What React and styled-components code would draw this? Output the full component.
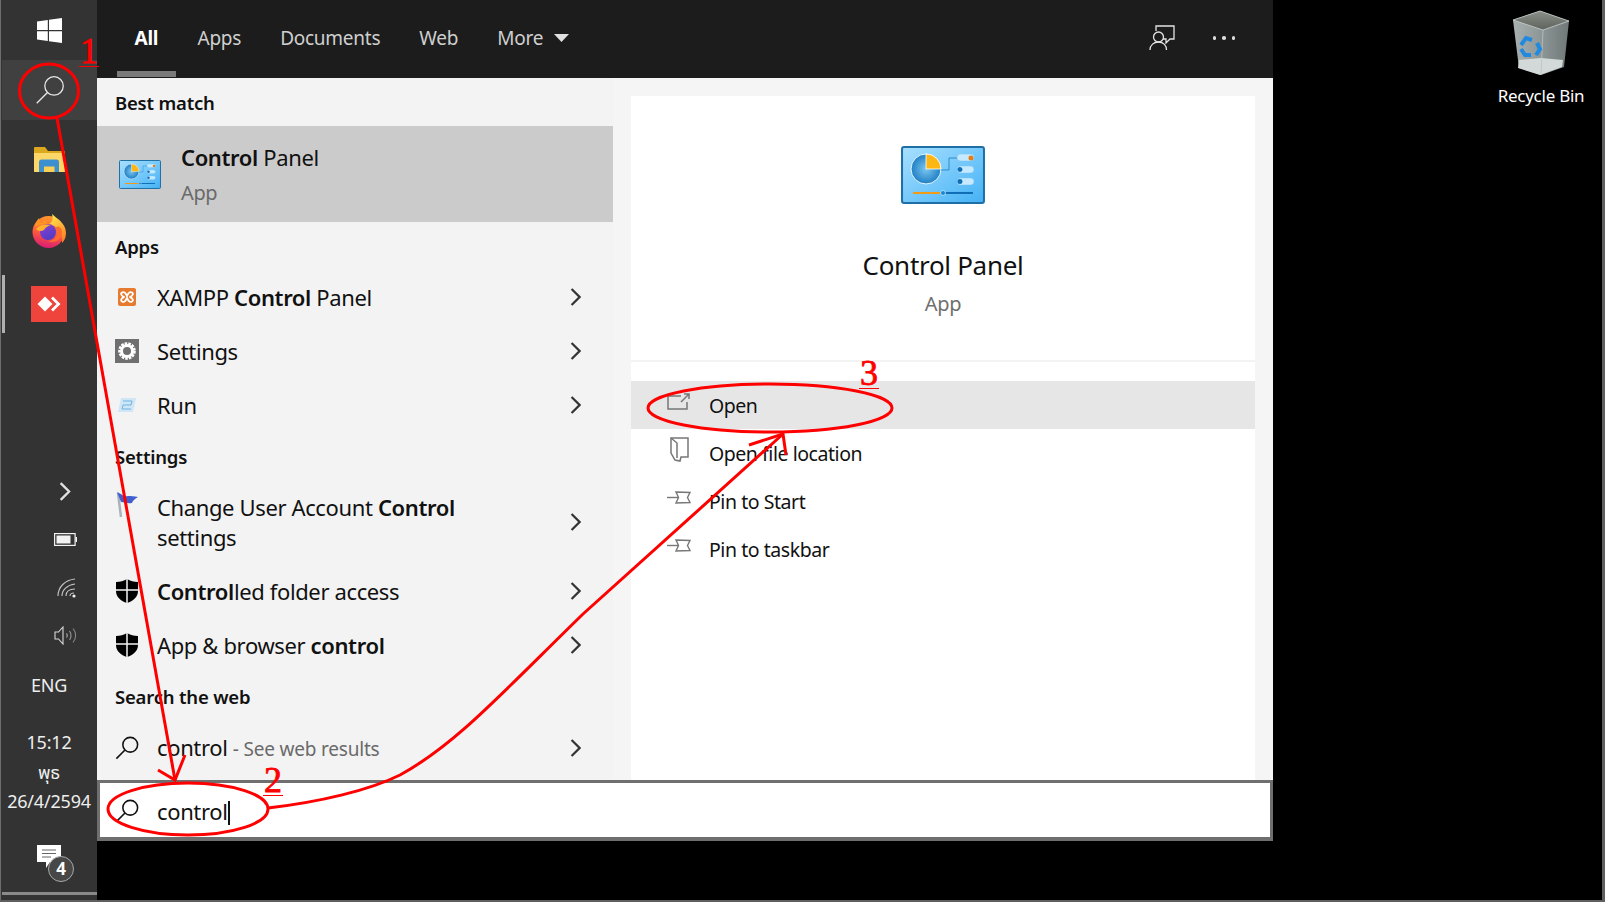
import React from 'react'
import styled, { createGlobalStyle } from 'styled-components'

const GlobalStyle = createGlobalStyle`
  html, body { margin: 0; padding: 0; background: #000; overflow: hidden; }
  * { box-sizing: border-box; }
  body { font-family: "Noto Sans", "Noto Sans Thai", "DejaVu Sans", sans-serif; }
`

const Screen = styled.div`
  position: relative;
  display: flex;
  width: 1605px;
  height: 902px;
  background: #000;
  border-right: 3px solid #5f5f5f;
  border-bottom: 2px solid #5f5f5f;
  overflow: hidden;
`

/* left taskbar */
const Taskbar = styled.div`
  width: 97px;
  height: 900px;
  flex: none;
  display: flex;
  flex-direction: column;
  background: #333;
  border-left: 1px solid #6e6e6e;
  color: #eee;
`
const TaskSlot = styled.div`
  height: ${(p) => p.$h}px;
  flex: none;
  display: flex;
  align-items: center;
  justify-content: ${(p) => (p.$right ? 'flex-end' : 'center')};
  padding-right: ${(p) => (p.$right ? p.$right : 0)}px;
  background: ${(p) => (p.$hot ? '#404040' : 'transparent')};
  margin-left: ${(p) => (p.$hot ? '1px' : '0')};
  margin-bottom: ${(p) => p.$after || 0}px;
  position: relative;
  &::before {
    content: '';
    display: ${(p) => (p.$running ? 'block' : 'none')};
    position: absolute;
    left: 1px;
    top: 7px;
    width: 3px;
    height: 58px;
    background: #b0b0b0;
  }
`
const Tray = styled.div`
  margin-top: auto;
  display: flex;
  flex-direction: column;
`
const LangText = styled.span`
  font-size: 18px;
  letter-spacing: -0.3px;
`
const Clock = styled.div`
  height: 113px;
  padding-top: 16px;
  text-align: center;
  font-size: 18px;
  line-height: 29.5px;
  letter-spacing: -0.2px;
  white-space: nowrap;
`
const TaskLine = styled.div`
  height: 3px;
  margin: 0 0 5px 1px;
  background: #8a8a8a;
`
const NoteWrap = styled.div`
  position: relative;
  width: 26px;
  height: 24px;
  margin: 0 0 4px 0;
  left: 1px;
`
const NoteBadge = styled.span`
  position: absolute;
  left: 11px;
  top: 11px;
  width: 26px;
  height: 26px;
  border-radius: 50%;
  background: #474747;
  border: 1px solid #a8a8a8;
  color: #fff;
  font-size: 17px;
  font-weight: 700;
  line-height: 24px;
  text-align: center;
`

/* search flyout */
const SearchWindow = styled.div`
  width: 1176px;
  height: 841px;
  flex: none;
  display: flex;
  flex-direction: column;
`
const TopBar = styled.div`
  height: 78px;
  flex: none;
  display: flex;
  align-items: center;
  padding-left: 20px;
  background: #1c1c1c;
`
const Tab = styled.div`
  position: relative;
  height: 78px;
  padding: 0 17.5px 2px;
  margin-right: 4px;
  display: flex;
  align-items: center;
  gap: 11px;
  font-size: 19px;
  letter-spacing: -0.25px;
  font-weight: ${(p) => (p.$active ? 700 : 400)};
  color: ${(p) => (p.$active ? '#fff' : '#cfcfcf')};
  min-width: ${(p) => (p.$active ? '59px' : '0')};
  &::after {
    content: '';
    display: ${(p) => (p.$active ? 'block' : 'none')};
    position: absolute;
    left: 0;
    right: 0;
    bottom: 1px;
    height: 6px;
    background: #7a7a7a;
  }
`
const TopActions = styled.div`
  margin-left: auto;
  display: flex;
  align-items: center;
  gap: 38px;
  padding: 0 38px 2px 0;
`
const Dots = styled.div`
  display: flex;
  gap: 6px;
  span { width: 3.5px; height: 3.5px; border-radius: 50%; background: #ddd; }
`
const Body = styled.div`
  flex: 1;
  min-height: 0;
  display: flex;
`
const Results = styled.div`
  width: 516px;
  flex: none;
  background: #f3f3f3;
  color: #111;
`
const Heading = styled.div`
  height: ${(p) => p.$h || 48}px;
  padding-left: 18px;
  display: flex;
  align-items: center;
  font-size: 18.5px;
  letter-spacing: -0.2px;
  font-weight: 600;
  color: #111;
`
const BestMatch = styled.div`
  height: 96px;
  display: flex;
  align-items: center;
  padding: 1px 0 0 22px;
  background: #cbcbcb;
`
const BestText = styled.div`
  margin-left: 20px;
  font-size: 22px;
  letter-spacing: -0.37px;
  line-height: 36px;
  b { font-weight: 600; }
  span { display: block; font-size: 20px; color: #6a6a6a; }
`
const Row = styled.div`
  height: ${(p) => p.$h || 54}px;
  display: flex;
  align-items: center;
  padding: 0 32px 0 18px;
  font-size: 22px;
  letter-spacing: -0.37px;
  line-height: 30px;
`
const RowIcon = styled.div`
  width: 24px;
  height: 26px;
  flex: none;
  display: flex;
  align-items: center;
  justify-content: center;
  margin-right: 18px;
  align-self: ${(p) => (p.$top ? 'flex-start' : 'center')};
  margin-top: ${(p) => (p.$top ? '12px' : '0')};
`
const RowText = styled.div`
  flex: 1;
  min-width: 0;
  b { font-weight: 600; }
`
const Hint = styled.span`
  font-size: 19px;
  letter-spacing: -0.2px;
  color: #6a6a6a;
`
const Detail = styled.div`
  flex: 1;
  background: #f5f5f5;
  padding: 18px 18px 0;
`
const DetailCard = styled.div`
  height: 684px;
  background: #fff;
  display: flex;
  flex-direction: column;
`
const DetailHead = styled.div`
  height: 266px;
  flex: none;
  display: flex;
  flex-direction: column;
  align-items: center;
  padding-top: 50px;
  border-bottom: 2px solid #f3f3f3;
`
const DetailTitle = styled.div`
  margin-top: 42px;
  font-size: 26px;
  letter-spacing: -0.3px;
  line-height: 38px;
  color: #111;
`
const DetailSub = styled.div`
  margin-top: 6px;
  font-size: 20px;
  letter-spacing: -0.3px;
  line-height: 28px;
  color: #6f6f6f;
`
const Actions = styled.div`
  padding-top: 19px;
`
const Action = styled.div`
  height: 48px;
  display: flex;
  align-items: center;
  padding: 1px 0 0 36px;
  font-size: 19.5px;
  letter-spacing: -0.45px;
  color: #111;
  background: ${(p) => (p.$hot ? '#e6e6e6' : 'transparent')};
`
const ActionIcon = styled.div`
  width: 24px;
  height: 28px;
  flex: none;
  margin: -8px 18px 0 0;
  display: flex;
  align-items: center;
  justify-content: center;
`
const SearchBox = styled.div`
  height: 61px;
  flex: none;
  display: flex;
  align-items: center;
  padding: 1px 0 0 15px;
  background: #fff;
  border: 3px solid #6f6f6f;
  border-bottom-width: 4px;
  font-size: 22px;
  letter-spacing: -0.37px;
  color: #111;
`
const Caret = styled.span`
  display: inline-block;
  width: 2px;
  height: 24px;
  margin-left: 1px;
  background: #111;
  vertical-align: -5px;
`

/* desktop */
const Desktop = styled.div`
  flex: 1;
  display: flex;
  justify-content: flex-end;
  padding: 10px 11px 0 0;
`
const DesktopItem = styled.div`
  width: 100px;
  height: 110px;
  display: flex;
  flex-direction: column;
  align-items: center;
  color: #fff;
  font-size: 17px;
  letter-spacing: -0.25px;
  white-space: nowrap;
`
const ItemLabel = styled.div`
  margin-top: 8px;
  line-height: 24px;
`

/* the red marks somebody drew on the screenshot */
const Overlay = styled.svg`
  position: absolute;
  inset: 0;
  width: 1605px;
  height: 902px;
  pointer-events: none;
`
const StepNumber = styled.span`
  position: absolute;
  left: ${(p) => p.$x}px;
  top: ${(p) => p.$y}px;
  width: 20px;
  height: 31px;
  border-bottom: 1.5px solid #f00;
  font-family: "Liberation Serif", serif;
  font-size: 36px;
  line-height: 30px;
  text-align: center;
  color: #f00;
  -webkit-text-stroke: 0.8px #f00;
`

const SearchGlyph = ({ size = 26, color = '#111', width = 1.7 }) => (
  <svg width={size} height={size} viewBox="0 0 26 26" fill="none" stroke={color} strokeWidth={width}>
    <circle cx="16.5" cy="9.5" r="8" />
    <path d="M10.8 15.2 1.5 24.5" />
  </svg>
)

const Chevron = ({ color = '#333', h = 18 }) => (
  <svg width={h * 0.62} height={h} viewBox="0 0 11 18" fill="none" stroke={color} strokeWidth="2.2">
    <path d="M1.5 1 9.5 9 1.5 17" />
  </svg>
)

const WindowsLogo = () => (
  <svg width="25" height="25" viewBox="0 0 25 25" fill="#fff">
    <path d="M0 3.6 10.8 2v10H0zM12 1.8 25 0v12H12zM0 13.2h10.8v9.9L0 21.5zM12 13.2h13V25l-13-1.8z" />
  </svg>
)

const ExplorerIcon = () => (
  <svg width="33" height="27" viewBox="0 0 33 27">
    <path d="M1 2a1 1 0 0 1 1-1h10l3 4h16a1 1 0 0 1 1 1v19a1 1 0 0 1-1 1H2a1 1 0 0 1-1-1z" fill="#dba91e" />
    <path d="M1 7h31v18a1 1 0 0 1-1 1H2a1 1 0 0 1-1-1z" fill="#fbd868" />
    <path d="M6 26V16a2.500 2.500 0 0 1 2.500-2.500h15A2.500 2.500 0 0 1 26 16v10z" fill="#3d90cf" />
    <path d="M11 20.500h10.500V26H11z" fill="#f9cf55" />
  </svg>
)

const FirefoxIcon = () => (
  <svg width="34" height="35" viewBox="0 0 34 35">
    <defs>
      <linearGradient id="ffBody" x1="0.6" y1="0" x2="0.4" y2="1">
        <stop offset="0" stopColor="#ff9a2e" />
        <stop offset="0.55" stopColor="#ff5a3c" />
        <stop offset="1" stopColor="#d81b74" />
      </linearGradient>
      <linearGradient id="ffFlame" x1="0.3" y1="0" x2="0.8" y2="1">
        <stop offset="0" stopColor="#ffe44d" />
        <stop offset="1" stopColor="#ff7a22" />
      </linearGradient>
      <linearGradient id="ffGlobe" x1="0.2" y1="0" x2="0.8" y2="1">
        <stop offset="0" stopColor="#8a3fd1" />
        <stop offset="1" stopColor="#4a3cc4" />
      </linearGradient>
    </defs>
    <circle cx="16.500" cy="18" r="16" fill="url(#ffBody)" />
    <path d="M20 0c5 5 14 9 14 19 0 5-2 8-4 10 1-9-3-17-13-19 4-2 4-6 3-10z" fill="url(#ffFlame)" />
    <path d="M3 13c0-4 2-6 4-9 0 3 1 4 3 5 1-2 3-4 5-5-1 2-1 4 0 6-4 0-9 1-12 3z" fill="#ff9422" />
    <circle cx="16" cy="18" r="8" fill="url(#ffGlobe)" />
    <path d="M4 15c4-5 10-5 15-4-4 1-6 3-7 5-3 2-6 1-8-1z" fill="#ffb02e" />
    <path d="M24 13c3 7 0 14-8 14 6 3 14-1 14-9 0-3-2-6-6-5z" fill="#ff6b2e" />
  </svg>
)

const AnyDeskIcon = () => (
  <svg width="36" height="36" viewBox="0 0 36 36">
    <rect width="36" height="36" fill="#ef443b" />
    <path d="M14 10.5 21.5 18 14 25.5 6.5 18z" fill="#fff" />
    <path d="M22 10.5 29.5 18 22 25.5 20 23.5 25.5 18 20 12.5z" fill="#fff" />
  </svg>
)

const BatteryIcon = () => (
  <svg width="23" height="13" viewBox="0 0 23 13">
    <rect x="0.6" y="0.6" width="20.5" height="11.8" fill="none" stroke="#f2f2f2" strokeWidth="1.2" />
    <rect x="2.5" y="2.5" width="14" height="8" fill="#f2f2f2" />
    <rect x="21.5" y="4" width="1.5" height="5" fill="#f2f2f2" />
  </svg>
)

const WifiIcon = () => (
  <svg width="20" height="20" viewBox="0 0 20 20" fill="none" stroke="#c4c4c4" strokeWidth="1.1">
    <path d="M1 18C1 9 8 2 18 1" />
    <path d="M5 18c0-6 5-11 13-12" />
    <path d="M9 18c0-4 3-7 9-7" />
    <path d="M13 18c0-2 2-3 4-3" />
    <circle cx="17" cy="18" r="1.6" fill="#eee" stroke="none" />
  </svg>
)

const SpeakerIcon = () => (
  <svg width="23" height="19" viewBox="0 0 23 19" fill="none" stroke="#d8d8d8" strokeWidth="1.1">
    <path d="M1 6h3.5L9 1v17l-4.5-5H1z" />
    <path d="M12.5 7.5c1 1 1 3 0 4" stroke="#aaa" />
    <path d="M15.5 5c2 2.500 2 6.500 0 9" stroke="#999" />
    <path d="M19 2.500c3.500 4 3.500 10 0 14" stroke="#888" />
  </svg>
)

const NoteIcon = () => (
  <svg width="24" height="24" viewBox="0 0 24 24">
    <path d="M0 0h24v17H13l-4 6v-6H0z" fill="#fff" />
    <path d="M5 5h14M5 8.500h14M5 12h9" stroke="#666" strokeWidth="1" />
  </svg>
)

const ControlPanelIcon = ({ size = 84 }) => (
  <svg width={size} height={size * 0.69} viewBox="0 0 84 58">
    <defs>
      <linearGradient id={`cpBg${size}`} x1="0" y1="0" x2="1" y2="1">
        <stop offset="0" stopColor="#a8e0ff" />
        <stop offset="1" stopColor="#45b2f5" />
      </linearGradient>
      <radialGradient id={`cpPie${size}`}>
        <stop offset="0" stopColor="#7cc6f0" />
        <stop offset="1" stopColor="#1f7fc4" />
      </radialGradient>
    </defs>
    <rect x="1" y="1" width="82" height="56" rx="2" fill={`url(#cpBg${size})`} stroke="#1d6fa5" strokeWidth="2" />
    <circle cx="25" cy="23" r="15" fill={`url(#cpPie${size})`} stroke="#e4f5ff" strokeWidth="1" />
    <path d="M25 8A15 15 0 0 1 40 23H25z" fill="#fdb714" stroke="#fff" strokeWidth="0.8" />
    <path d="M40 24h8V12h8" fill="none" stroke="#1d7cc0" strokeWidth="0.8" />
    <rect x="56" y="8" width="17" height="7" rx="3.500" fill="#c5eaff" stroke="#74c3ef" strokeWidth="0.5" />
    <rect x="56" y="20" width="17" height="7" rx="3.500" fill="#c5eaff" stroke="#74c3ef" strokeWidth="0.5" />
    <rect x="56" y="32" width="17" height="7" rx="3.500" fill="#c5eaff" stroke="#74c3ef" strokeWidth="0.5" />
    <circle cx="70" cy="12" r="2.500" fill="#e87b12" />
    <circle cx="59" cy="23.500" r="2.500" fill="#0f6db5" />
    <circle cx="59" cy="35.500" r="2.500" fill="#0f6db5" />
    <path d="M12 47h30" stroke="#f59a12" strokeWidth="2" />
    <path d="M42 47h30" stroke="#0f6db5" strokeWidth="2" />
    <circle cx="42" cy="47" r="2.500" fill="#1989d8" stroke="#bfe6ff" strokeWidth="0.8" />
  </svg>
)

const XamppIcon = () => (
  <svg width="18" height="18" viewBox="0 0 18 18">
    <rect width="18" height="18" rx="2" fill="#e67a2e" />
    <path d="M4 4.500c2.500-1.500 4 1.500 5 3.500 1-2 2.500-5 5-3.500 2 1.500 0 4-2.500 4.500 2.500.5 4.500 3 2.500 4.500-2.500 1.500-4-1.500-5-3.500-1 2-2.500 5-5 3.500-2-1.500 0-4 2.500-4.500C4 8.500 2 6 4 4.500z" fill="none" stroke="#fff" strokeWidth="1.800" />
  </svg>
)

const SettingsIcon = () => (
  <svg width="24" height="24" viewBox="0 0 24 24">
    <rect width="24" height="24" fill="#6f6f6f" />
    <circle cx="12" cy="12" r="7" fill="none" stroke="#fff" strokeWidth="3.600" strokeDasharray="2.400 1.000" />
    <circle cx="12" cy="12" r="5.500" fill="none" stroke="#fff" strokeWidth="3" />
  </svg>
)

const RunIcon = () => (
  <svg width="18" height="14" viewBox="0 0 18 14">
    <path d="M3 0h15l-3 14H0z" fill="#cfe6f6" />
    <path d="M5 3h9l-1 4H5l-1 4h9" fill="none" stroke="#6fb2e0" strokeWidth="1" />
  </svg>
)

const FlagIcon = () => (
  <svg width="24" height="26" viewBox="0 0 24 26">
    <path d="M3 1l3 24" stroke="#a9b1ba" strokeWidth="2.500" />
    <path d="M2 0c5 2 6 5 11 4 3 0 6 0 10 1-3 2-5 3-6 6-5 1-7-1-11-1z" fill="#3f5fd0" />
  </svg>
)

const ShieldIcon = () => (
  <svg width="24" height="24" viewBox="0 0 24 24">
    <path d="M12 0c3 2 7 3 11 3v9c0 6-5 10-11 12C6 22 1 18 1 12V3c4 0 8-1 11-3z" fill="#000" />
    <path d="M12 0v24M1 11h22" stroke="#f3f3f3" strokeWidth="1.500" />
  </svg>
)

const FeedbackIcon = () => (
  <svg width="26" height="26" viewBox="0 0 26 26" fill="none" stroke="#e4e4e4" strokeWidth="1.300">
    <path d="M7 6V1h18v13h-4l-4 4v-4h-3" />
    <circle cx="9.500" cy="12" r="5" />
    <path d="M1 25c0-5 4-8 8.500-8s8 3 8 8" />
  </svg>
)

const OpenIcon = () => (
  <svg width="24" height="17" viewBox="0 0 24 17" fill="none" stroke="#777" strokeWidth="1.500">
    <path d="M14 3H1v13h19V9" />
    <path d="M14 9 22 1M17 1h5v5" />
  </svg>
)

const FolderIcon = () => (
  <svg width="19" height="25" viewBox="0 0 19 25" fill="none" stroke="#777" strokeWidth="1.500">
    <path d="M1 1h17v19h-7l-1 4-5-1-4-7z" />
    <path d="M1 1l6 5v15" />
  </svg>
)

const PinIcon = () => (
  <svg width="24" height="13" viewBox="0 0 24 13" fill="none" stroke="#777" strokeWidth="1.400">
    <path d="M0 6.500h11.500" />
    <path d="M9 1l14 .5L20.500 6.500 23 11.500 9 12l2.500-5.500z" />
  </svg>
)

const BinIcon = () => (
  <svg width="58" height="66" viewBox="0 0 58 66">
    <defs>
      <linearGradient id="binBody" x1="0" y1="0" x2="1" y2="0">
        <stop offset="0" stopColor="#a8b0b0" />
        <stop offset="0.55" stopColor="#8b9494" />
        <stop offset="1" stopColor="#6f7777" />
      </linearGradient>
      <linearGradient id="binIn" x1="0" y1="0" x2="0" y2="1">
        <stop offset="0" stopColor="#8a8f88" />
        <stop offset="1" stopColor="#5e625c" />
      </linearGradient>
    </defs>
    <path d="M1 10 28 1l29 10-5 46-23 8-22-7z" fill="url(#binBody)" />
    <path d="M1 10 28 1l29 10-26 9z" fill="url(#binIn)" stroke="#c9cfcf" strokeWidth="0.800" />
    <path d="M6 58 7 50l22-2 22 2-1 7-22 8z" fill="#d3d8d8" />
    <path d="M31 20 29 65" stroke="#bcc2c2" strokeWidth="0.800" />
    <g fill="none" stroke="#1f8ae0" strokeWidth="4">
      <path d="M9 35l5-7 6 2" />
      <path d="M19 45h-6l-4-6" />
      <path d="M25 33l3 6-4 6" />
    </g>
  </svg>
)

const Marks = () => (
  <Overlay viewBox="0 0 1605 902" fill="none" stroke="#f00" strokeWidth="3">
    <ellipse cx="49" cy="91" rx="29.500" ry="27" />
    <path d="M57 118 175 780" />
    <path d="M158 770 175 780 185 755" />
    <ellipse cx="188" cy="809" rx="80" ry="26" />
    <path d="M268 808C320 802 370 790 400 775 455 745 500 695 583 614L783 434" />
    <path d="M749 445 783 434 786 455" />
    <ellipse cx="770" cy="408" rx="122" ry="24" />
  </Overlay>
)

const App = () => (
  <>
    <GlobalStyle />
    <Screen>
      <Taskbar>
        <TaskSlot $h={60}><WindowsLogo /></TaskSlot>
        <TaskSlot $h={60} $hot $after={4}><SearchGlyph size={30} color="#e8e8e8" width={1.1} /></TaskSlot>
        <TaskSlot $h={70}><ExplorerIcon /></TaskSlot>
        <TaskSlot $h={74}><FirefoxIcon /></TaskSlot>
        <TaskSlot $h={72} $running><AnyDeskIcon /></TaskSlot>
        <Tray>
          <TaskSlot $h={48} $right={26}><Chevron color="#e0e0e0" h={19} /></TaskSlot>
          <TaskSlot $h={48} $right={20}><BatteryIcon /></TaskSlot>
          <TaskSlot $h={49} $right={20}><WifiIcon /></TaskSlot>
          <TaskSlot $h={46} $right={20}><SpeakerIcon /></TaskSlot>
          <TaskSlot $h={54}><LangText>ENG</LangText></TaskSlot>
          <Clock>15:12<br />พุธ<br />26/4/2594</Clock>
          <TaskSlot $h={67}>
            <NoteWrap>
              <NoteIcon />
              <NoteBadge>4</NoteBadge>
            </NoteWrap>
          </TaskSlot>
          <TaskLine />
        </Tray>
      </Taskbar>

      <SearchWindow>
        <TopBar>
          <Tab $active>All</Tab>
          <Tab>Apps</Tab>
          <Tab>Documents</Tab>
          <Tab>Web</Tab>
          <Tab>
            More
            <svg width="15" height="8" viewBox="0 0 15 8"><path d="M0 0h15L7.500 8z" fill="#e0e0e0" /></svg>
          </Tab>
          <TopActions>
            <FeedbackIcon />
            <Dots><span /><span /><span /></Dots>
          </TopActions>
        </TopBar>

        <Body>
          <Results>
            <Heading>Best match</Heading>
            <BestMatch>
              <ControlPanelIcon size={42} />
              <BestText>
                <b>Control</b> Panel
                <span>App</span>
              </BestText>
            </BestMatch>
            <Heading>Apps</Heading>
            <Row>
              <RowIcon><XamppIcon /></RowIcon>
              <RowText>XAMPP <b>Control</b> Panel</RowText>
              <Chevron />
            </Row>
            <Row>
              <RowIcon><SettingsIcon /></RowIcon>
              <RowText>Settings</RowText>
              <Chevron />
            </Row>
            <Row>
              <RowIcon><RunIcon /></RowIcon>
              <RowText>Run</RowText>
              <Chevron />
            </Row>
            <Heading>Settings</Heading>
            <Row $h={84}>
              <RowIcon $top><FlagIcon /></RowIcon>
              <RowText>Change User Account <b>Control</b><br />settings</RowText>
              <Chevron />
            </Row>
            <Row>
              <RowIcon><ShieldIcon /></RowIcon>
              <RowText><b>Control</b>led folder access</RowText>
              <Chevron />
            </Row>
            <Row>
              <RowIcon><ShieldIcon /></RowIcon>
              <RowText>App &amp; browser <b>control</b></RowText>
              <Chevron />
            </Row>
            <Heading $h={49}>Search the web</Heading>
            <Row>
              <RowIcon><SearchGlyph /></RowIcon>
              <RowText>control <Hint>- See web results</Hint></RowText>
              <Chevron />
            </Row>
          </Results>

          <Detail>
            <DetailCard>
              <DetailHead>
                <ControlPanelIcon />
                <DetailTitle>Control Panel</DetailTitle>
                <DetailSub>App</DetailSub>
              </DetailHead>
              <Actions>
                <Action $hot><ActionIcon><OpenIcon /></ActionIcon>Open</Action>
                <Action><ActionIcon><FolderIcon /></ActionIcon>Open file location</Action>
                <Action><ActionIcon><PinIcon /></ActionIcon>Pin to Start</Action>
                <Action><ActionIcon><PinIcon /></ActionIcon>Pin to taskbar</Action>
              </Actions>
            </DetailCard>
          </Detail>
        </Body>

        <SearchBox>
          <RowIcon><SearchGlyph /></RowIcon>
          <span>control<Caret /></span>
        </SearchBox>
      </SearchWindow>

      <Desktop>
        <DesktopItem>
          <BinIcon />
          <ItemLabel>Recycle Bin</ItemLabel>
        </DesktopItem>
      </Desktop>

      <Marks />
      <StepNumber $x={79} $y={36}>1</StepNumber>
      <StepNumber $x={263} $y={765}>2</StepNumber>
      <StepNumber $x={859} $y={358}>3</StepNumber>
    </Screen>
  </>
)

export default App
